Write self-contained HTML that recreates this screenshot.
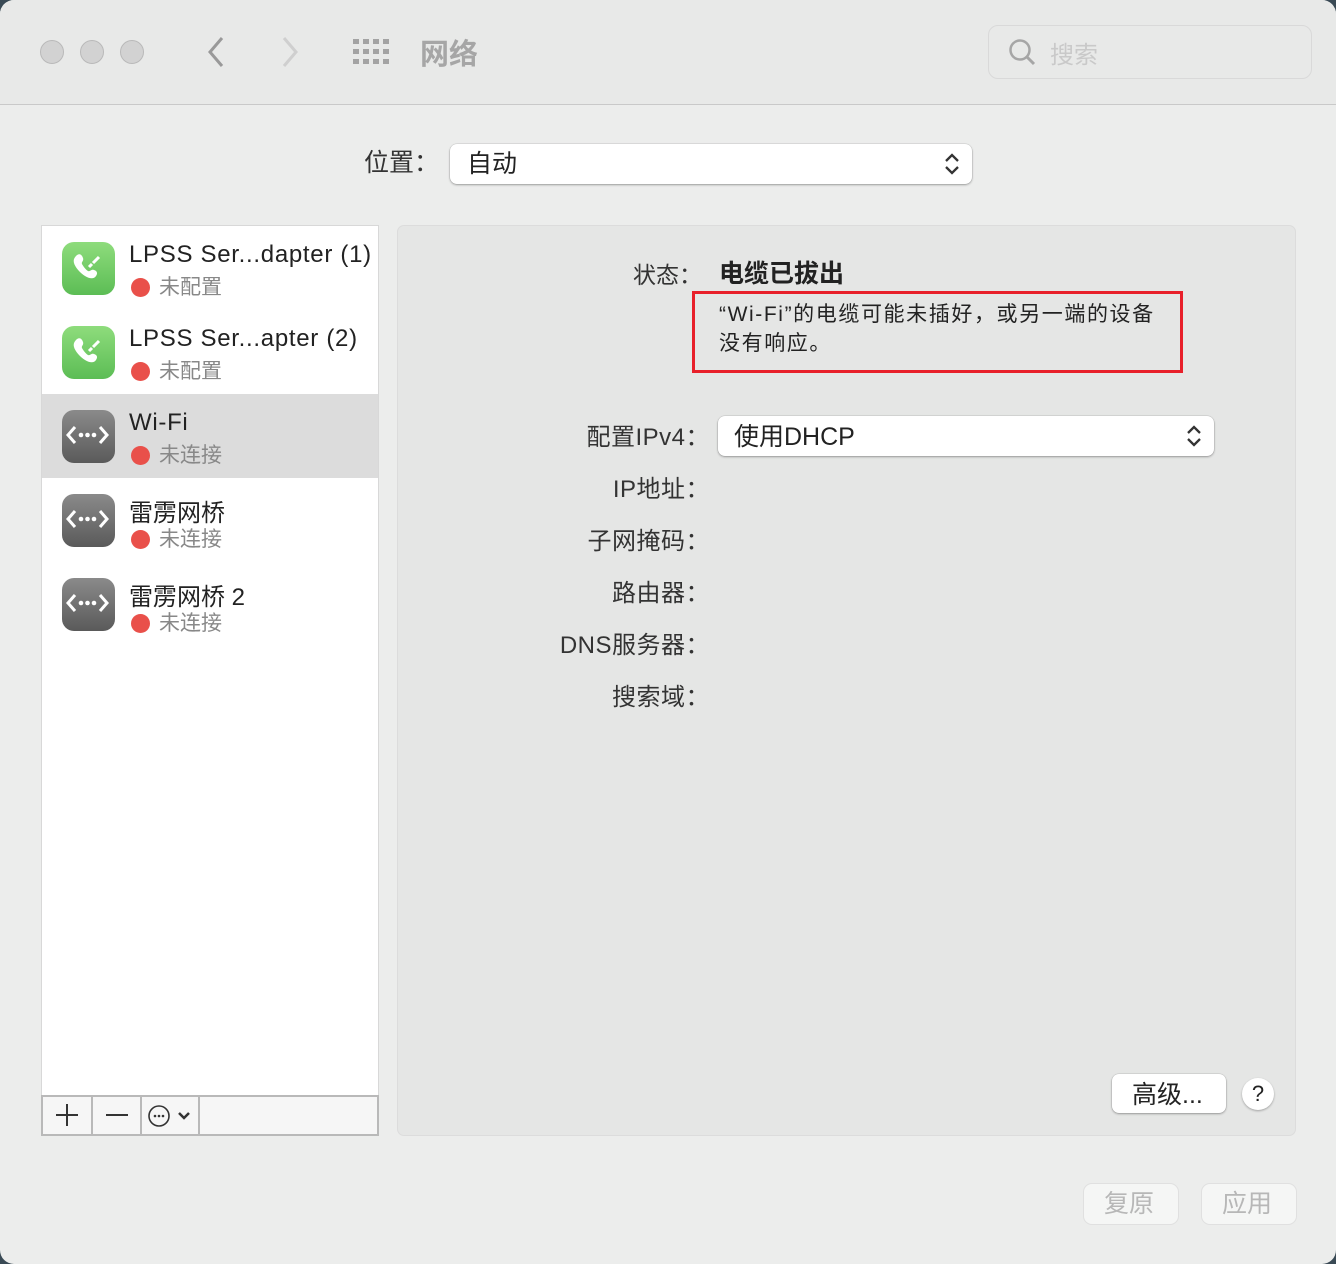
<!DOCTYPE html>
<html><head><meta charset="utf-8"><style>
*{margin:0;padding:0;box-sizing:border-box}
body{width:1336px;height:1264px;background:#3a4a55;font-family:"Liberation Sans","Noto Sans CJK SC",sans-serif;color:#222;overflow:hidden;position:relative}
.win{position:absolute;left:0;top:0;width:1336px;height:1264px;background:#ecedec;border-radius:14px;overflow:hidden}
.title{position:absolute;left:0;top:0;width:1336px;height:105px;background:#e8e9e8;border-bottom:1px solid #c9c9c9}
.a{position:absolute;white-space:nowrap}
.dot{position:absolute;top:40px;width:24px;height:24px;border-radius:50%;background:#d2d2d2;border:1px solid #b9b9b9}
.side{position:absolute;left:41px;top:225px;width:338px;height:911px;background:#fff;border:1px solid #d8d8d8}
.item{position:absolute;left:0;width:336px;height:84px}
.icon{position:absolute;left:20px;top:16px;width:53px;height:53px;border-radius:12px}
.g{background:linear-gradient(#8edc7c,#5cbd55)}
.gr{background:linear-gradient(#8a8a8a,#5a5a5a)}
.t1{position:absolute;left:87px;top:15px;font-size:24px;color:#222;letter-spacing:.7px}
.t2{position:absolute;left:117px;top:45px;font-size:21px;color:#888}
.rd{position:absolute;left:89px;top:52px;width:19px;height:19px;border-radius:50%;background:#e9504a}
.panel{position:absolute;left:397px;top:225px;width:899px;height:911px;background:#e5e6e5;border:1px solid #dcdcdc;border-radius:7px}
.lab{position:absolute;right:626px;font-size:24px;color:#333;text-align:right;letter-spacing:.5px}
.btn{position:absolute;background:#fff;border-radius:7px;box-shadow:0 1px 2px rgba(0,0,0,.3),0 0 0 .5px rgba(0,0,0,.12)}
</style></head><body>
<div class="win">
<div class="title">
<div class="dot" style="left:40px"></div><div class="dot" style="left:80px"></div><div class="dot" style="left:120px"></div>
<svg class="a" style="left:200px;top:34px" width="30" height="36"><path d="M22 4 L10 18 L22 32" stroke="#999" stroke-width="3" fill="none"/></svg>
<svg class="a" style="left:276px;top:34px" width="30" height="36"><path d="M8 4 L20 18 L8 32" stroke="#cfcfcf" stroke-width="3" fill="none"/></svg>
<svg class="a" style="left:352px;top:38px" width="40" height="28" fill="#a3a3a3">
<rect x="1" y="1" width="6" height="5"/><rect x="11" y="1" width="6" height="5"/><rect x="21" y="1" width="6" height="5"/><rect x="31" y="1" width="6" height="5"/>
<rect x="1" y="11" width="6" height="5"/><rect x="11" y="11" width="6" height="5"/><rect x="21" y="11" width="6" height="5"/><rect x="31" y="11" width="6" height="5"/>
<rect x="1" y="21" width="6" height="5"/><rect x="11" y="21" width="6" height="5"/><rect x="21" y="21" width="6" height="5"/><rect x="31" y="21" width="6" height="5"/></svg>
<div class="a" style="left:420px;top:31px;font-size:29px;font-weight:bold;color:#a6a6a6">网络</div>
<div class="a" style="left:988px;top:25px;width:324px;height:54px;border:1.5px solid #d9d9d9;border-radius:10px"></div>
<svg class="a" style="left:1008px;top:38px" width="30" height="30"><circle cx="12" cy="12" r="9.5" stroke="#a6a6a6" stroke-width="2.5" fill="none"/><path d="M19 19 L26 26" stroke="#a6a6a6" stroke-width="3"/></svg>
<div class="a" style="left:1050px;top:35px;font-size:24px;color:#c9c9c9">搜索</div>
</div>

<div class="a" style="left:364px;top:143px;font-size:25px;color:#333">位置：</div>
<div class="btn" style="left:450px;top:144px;width:522px;height:40px"></div>
<div class="a" style="left:467px;top:144px;font-size:25px;color:#222">自动</div>
<svg class="a" style="left:942px;top:151px" width="20" height="26"><path d="M4 10 L10 4 L16 10 M4 16 L10 22 L16 16" stroke="#333" stroke-width="2.3" fill="none"/></svg>

<div class="side">
<div class="item" style="top:0"><div class="icon g"></div><div class="t1">LPSS Ser...dapter (1)</div><div class="rd"></div><div class="t2">未配置</div></div>
<div class="item" style="top:84px"><div class="icon g"></div><div class="t1">LPSS Ser...apter (2)</div><div class="rd"></div><div class="t2">未配置</div></div>
<div class="item" style="top:168px;background:#dcdcdc"><div class="icon gr"></div><div class="t1">Wi-Fi</div><div class="rd"></div><div class="t2">未连接</div></div>
<div class="item" style="top:252px"><div class="icon gr"></div><div class="t1" style="letter-spacing:0">雷雳网桥</div><div class="rd"></div><div class="t2">未连接</div></div>
<div class="item" style="top:336px"><div class="icon gr"></div><div class="t1" style="letter-spacing:0">雷雳网桥 2</div><div class="rd"></div><div class="t2">未连接</div></div>
<div class="a" style="left:-1px;top:869px;width:338px;height:41px;background:#f6f6f6;border:2px solid #b9b9b9"></div>
<div class="a" style="left:49px;top:869px;width:2px;height:41px;background:#b9b9b9"></div>
<div class="a" style="left:98px;top:869px;width:2px;height:41px;background:#b9b9b9"></div>
<div class="a" style="left:156px;top:869px;width:2px;height:41px;background:#b9b9b9"></div>
<div class="a" style="left:14px;top:888px;width:22px;height:2px;background:#333"></div>
<div class="a" style="left:24px;top:878px;width:2px;height:22px;background:#333"></div>
<div class="a" style="left:64px;top:888px;width:22px;height:2px;background:#333"></div>
<svg class="a" style="left:104px;top:877px" width="50" height="26"><circle cx="13" cy="13" r="10" stroke="#333" stroke-width="1.6" fill="none"/><circle cx="9" cy="13" r="1.3" fill="#333"/><circle cx="13" cy="13" r="1.3" fill="#333"/><circle cx="17" cy="13" r="1.3" fill="#333"/><path d="M33 10 L38 15 L43 10" stroke="#333" stroke-width="2.5" fill="none"/></svg>
</div>
<svg class="a" style="left:61px;top:241px" width="53" height="53"><path d="M16 14c3-2 5 0 6 3s-2 4-1 6 4 6 6 7 3-2 6-1 4 3 2 6-6 3-11 0-10-9-11-13 1-6 3-8z" fill="#fff"/><path d="M28 26l3-3M32 22l3-3M35 19l3-3" stroke="#fff" stroke-width="3"/></svg>
<svg class="a" style="left:61px;top:325px" width="53" height="53"><path d="M16 14c3-2 5 0 6 3s-2 4-1 6 4 6 6 7 3-2 6-1 4 3 2 6-6 3-11 0-10-9-11-13 1-6 3-8z" fill="#fff"/><path d="M28 26l3-3M32 22l3-3M35 19l3-3" stroke="#fff" stroke-width="3"/></svg>
<svg class="a" style="left:61px;top:409px" width="53" height="53"><path d="M14 18l-7 8 7 8M39 18l7 8-7 8" stroke="#fff" stroke-width="3" fill="none"/><circle cx="20" cy="26" r="2.3" fill="#fff"/><circle cx="26.5" cy="26" r="2.3" fill="#fff"/><circle cx="33" cy="26" r="2.3" fill="#fff"/></svg>
<svg class="a" style="left:61px;top:493px" width="53" height="53"><path d="M14 18l-7 8 7 8M39 18l7 8-7 8" stroke="#fff" stroke-width="3" fill="none"/><circle cx="20" cy="26" r="2.3" fill="#fff"/><circle cx="26.5" cy="26" r="2.3" fill="#fff"/><circle cx="33" cy="26" r="2.3" fill="#fff"/></svg>
<svg class="a" style="left:61px;top:577px" width="53" height="53"><path d="M14 18l-7 8 7 8M39 18l7 8-7 8" stroke="#fff" stroke-width="3" fill="none"/><circle cx="20" cy="26" r="2.3" fill="#fff"/><circle cx="26.5" cy="26" r="2.3" fill="#fff"/><circle cx="33" cy="26" r="2.3" fill="#fff"/></svg>

<div class="panel"></div>
<div class="a" style="left:633px;top:256px;font-size:23px;color:#333">状态：</div>
<div class="a" style="left:719px;top:254px;font-size:25px;font-weight:bold;color:#222">电缆已拔出</div>
<div class="a" style="left:692px;top:291px;width:491px;height:82px;border:3px solid #e8202a"></div>
<div class="a" style="left:719px;top:300px;font-size:21px;line-height:29px;color:#222;letter-spacing:1.6px">“Wi-Fi”的电缆可能未插好，或另一端的设备<br>没有响应。</div>

<div class="lab" style="top:417px">配置IPv4：</div>
<div class="btn" style="left:718px;top:416px;width:496px;height:40px"></div>
<div class="a" style="left:734px;top:417px;font-size:25px;color:#222">使用DHCP</div>
<svg class="a" style="left:1184px;top:423px" width="20" height="26"><path d="M4 10 L10 4 L16 10 M4 16 L10 22 L16 16" stroke="#333" stroke-width="2.3" fill="none"/></svg>
<div class="lab" style="top:469px">IP地址：</div>
<div class="lab" style="top:521px">子网掩码：</div>
<div class="lab" style="top:573px">路由器：</div>
<div class="lab" style="top:625px">DNS服务器：</div>
<div class="lab" style="top:677px">搜索域：</div>

<div class="btn" style="left:1112px;top:1074px;width:114px;height:39px"></div>
<div class="a" style="left:1132px;top:1075px;font-size:25px;color:#222">高级...</div>
<div class="a" style="left:1242px;top:1078px;width:32px;height:32px;border-radius:50%;background:#fff;box-shadow:0 1px 2px rgba(0,0,0,.3);font-size:22px;text-align:center;line-height:32px">?</div>

<div class="a" style="left:1084px;top:1184px;width:94px;height:40px;background:#f5f6f5;border-radius:8px;box-shadow:0 0 0 1px #e0e0e0"></div>
<div class="a" style="left:1104px;top:1184px;font-size:25px;color:#b7b7b7">复原</div>
<div class="a" style="left:1202px;top:1184px;width:94px;height:40px;background:#f5f6f5;border-radius:8px;box-shadow:0 0 0 1px #e0e0e0"></div>
<div class="a" style="left:1222px;top:1184px;font-size:25px;color:#b7b7b7">应用</div>
</div>
</body></html>
